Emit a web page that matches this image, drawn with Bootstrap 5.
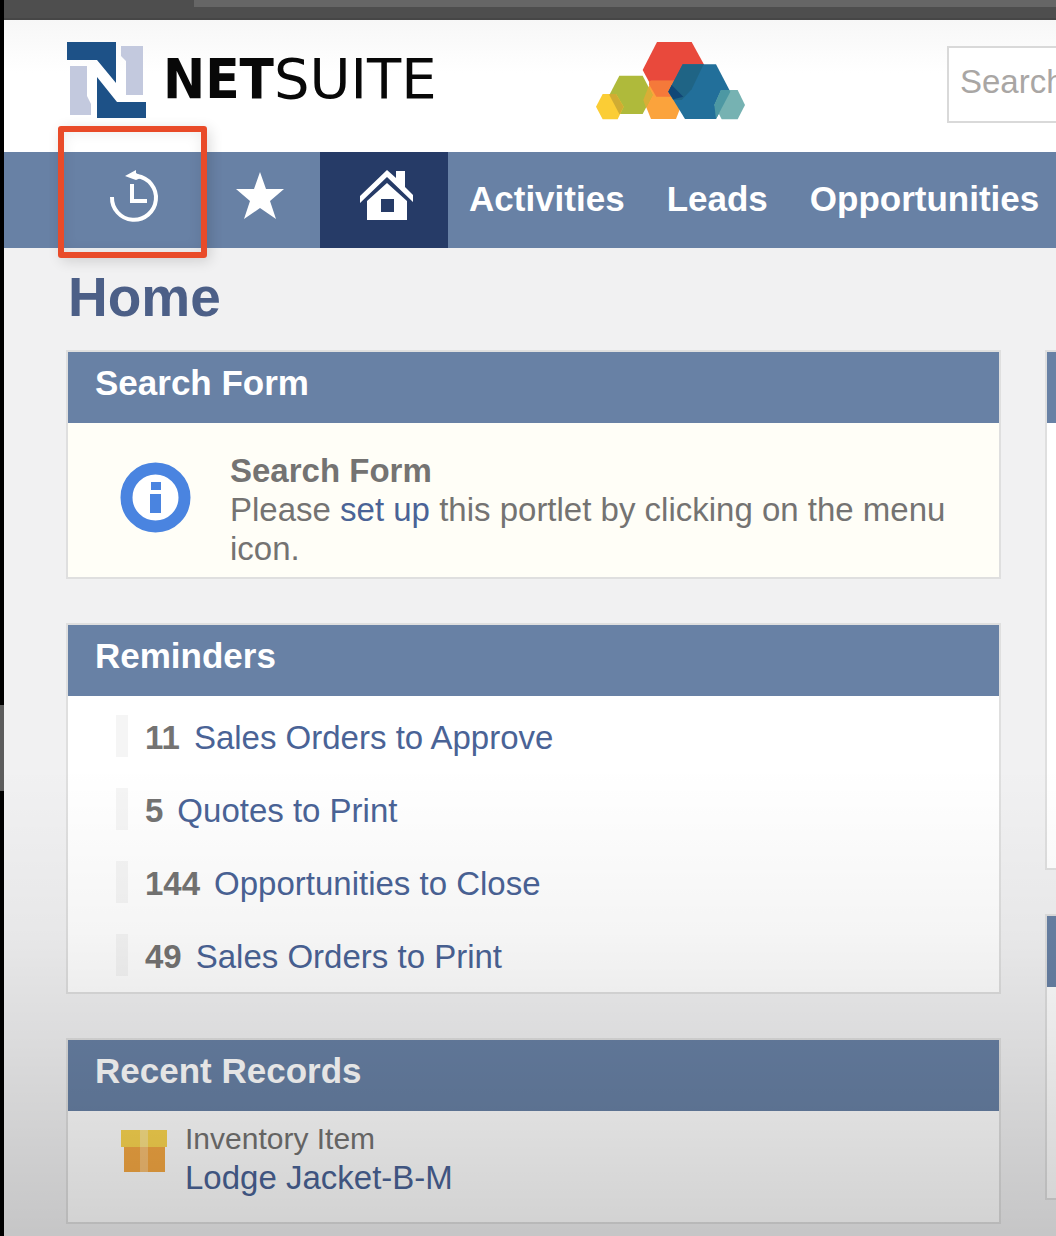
<!DOCTYPE html>
<html lang="en">
<head>
<meta charset="utf-8">
<meta name="viewport" content="width=device-width, initial-scale=1">
<title>Home - NetSuite</title>
<link href="https://cdn.jsdelivr.net/npm/bootstrap@5.3.0/dist/css/bootstrap.min.css" rel="stylesheet">
<style>
  :root { --ns-blue: #6881a5; --ns-navy: #263b67; --ns-link: #4a6396; --ns-text: #747372; }
  body { font-family: "Liberation Sans", Arial, sans-serif; font-size: 33px; line-height: 39px; color: var(--ns-text); background: #f1f1f2; }
  a { color: var(--ns-link); text-decoration: none; }
  .edge-strip { flex: 0 0 4px; background: linear-gradient(#000 57%, #5c5c5c 57%, #5c5c5c 64%, #000 64%); }
  .page-shell { min-width: 0; }
  .browser-bar { height: 20px; padding-left: 190px; background: #4e4e4e; border-bottom: 2px solid #464646; }
  .browser-tab { height: 7px; background: #666; }
  .brand-bar { height: 132px; padding-left: 62px; background: linear-gradient(#f7f7f7, #fff 40%); }
  .brand-left { flex: 0 0 530px; margin-top: 21px; }
  .brand-text { font-size: 56px; line-height: 76px; color: #080808; font-family: "DejaVu Sans", sans-serif; margin-left: 15px; }
  .brand-text b { font-family: "DejaVu Sans Condensed", "Open Sans", sans-serif; }
  .search-box { flex: 0 0 480px; height: 77px; margin: 26px 0 0 201px; padding: 0 11px 6px; font-size: 33px; border: 2px solid #d9d9d9; border-radius: 0; background: #fff; color: #555; }
  .search-box::placeholder { color: #a9a6a4; opacity: 1; }
  .main-nav { height: 96px; padding-left: 66px; background: var(--ns-blue); }
  .nav-tile { flex: 0 0 128px; border: 0; padding: 0 0 8px; background: transparent; }
  .nav-tile.fav { flex-basis: 122px; }
  .nav-tile.now { background: var(--ns-navy); }
  .nav-words { font-size: 35px; font-weight: 700; padding: 0 21px 4px; gap: 42px; }
  .nav-words a { color: #fff; }
  .callout-frame { left: -12px; top: -26px; width: 149px; height: 132px; border: 6px solid #e94b29; border-radius: 3px; box-shadow: 3px 3px 14px rgba(0,0,0,.14), inset 0 0 14px rgba(0,0,0,.08); pointer-events: none; }
  .page-main { padding: 19px 0 14px 64px; }
  .page-title { font-size: 55px; line-height: 60px; font-weight: 700; color: #4c5f87; margin-bottom: 25px; }
  .portlet-grid { display: grid; grid-template-columns: 94.25% 94.25%; column-gap: 48px; }
  .portlet { box-shadow: 0 0 0 2px #dfdfdf; background: #fff; margin-bottom: 48px; }
  .portlet-head { font-size: 35px; line-height: 40px; font-weight: 700; margin: 0; padding: 11px 27px 20px; min-height: 71px; background: var(--ns-blue); color: #fff; }
  .notice-body { background: #fffef7; padding: 28px 27px 9px 52px; gap: 39px; min-height: 154px; }
  .notice-body svg { margin-top: 11px; }
  .reminder-list { padding: 3px 0 1px; }
  .reminder-row { height: 73px; padding-left: 48px; }
  .reminder-row::before { content: ""; width: 12px; height: 42px; margin-right: 17px; background: #f5f5f5; }
  .reminder-row b, .reminder-row a { padding-top: 4px; }
  .reminder-row b { margin-right: 14px; }
  .record-body { min-height: 111px; padding: 8px 27px 0 52px; gap: 17px; }
  .record-body svg { margin-top: 10px; }
  .record-kind { font-size: 30px; }
  .side-top { min-height: 445px; }
  .side-low { min-height: 211px; }
  .bottom-shade { top: 62%; background: linear-gradient(rgba(0,0,0,0), rgba(0,0,0,.04) 35%, rgba(0,0,0,.18)); pointer-events: none; }
</style>
</head>
<body>
<div class="d-flex min-vh-100 position-relative overflow-hidden">
  <div class="edge-strip"></div>
  <div class="page-shell flex-grow-1 overflow-hidden">
    <div class="browser-bar"><div class="browser-tab"></div></div>

    <header class="brand-bar d-flex align-items-start">
      <a href="#" class="brand-left d-flex align-items-start" aria-label="NetSuite home">
        <svg class="flex-shrink-0" width="82" height="80" viewBox="66 41 82 80" aria-hidden="true">
          <path fill="#c3c9de" d="M70 66h17v30l4 8v11H70zM121 46h22v49h-17V61l-5-5z"/>
          <path fill="#1d5187" d="M67 42h49v41L97 60H67zM97 77l20 25h29v16H97z"/>
        </svg>
        <span class="brand-text"><b>NET</b>SUITE</span>
      </a>
      <svg class="flex-shrink-0 mt-3" width="150" height="86" viewBox="45 48 450 258" aria-hidden="true">
        <path fill="#e9493c" d="M185 150l43-84h104l46 84-46 80H228z"/>
        <path fill="#fff" d="M180 150l42 80h12l-30 20-30-60z"/>
        <path fill="#fba33c" d="M187 240l23-58h75l22 58-22 57h-75z"/>
        <path fill="#f5793a" d="M205 182h82l16 48h-77l-22-37z"/>
        <path fill="#afba3b" d="M85 225l30-58h70l30 58-30 57h-70z"/>
        <path fill="#fbcd35" d="M45 260l20-38h40l23 38-18 38H65z"/>
        <path fill="#d0ac33" d="M86 222h19l23 38-11 22h-2l-30-57z"/>
        <path fill="#d9ae36" d="M202 201l13 24-20 39-8-24z"/>
        <path fill="#226f9a" d="M262 215l43-82h100l43 82-43 82h-93z"/>
        <path fill="#1f6485" d="M262 215l43-82h63l-36 75-30 32-25 0z"/>
        <path fill="#114777" d="M262 215l10-20 35 35-30 8z"/>
        <path fill="#76b2b2" d="M400 255l20-45h50l22 45-22 43h-48z"/>
        <path fill="#4d98a3" d="M400 255l20-45h25l3 5-43 82z"/>
      </svg>
      <input class="search-box form-control" type="search" placeholder="Search" aria-label="Search">
    </header>

    <nav class="main-nav d-flex position-relative">
      <button type="button" class="nav-tile position-relative" aria-label="Recent records">
        <svg width="52" height="56" viewBox="108 168 52 56" aria-hidden="true" fill="none" stroke="#fff">
          <path stroke-width="4" d="M112 197a22 22 0 1 0 25-21"/>
          <path stroke-width="4" d="M132 184v17h15"/>
          <path fill="#fff" stroke="none" d="M125 176l11-6v3l7 4-7 3-3-1z"/>
        </svg>
        <span class="callout-frame position-absolute"></span>
      </button>
      <button type="button" class="nav-tile fav" aria-label="Shortcuts">
        <svg width="52" height="56" viewBox="233 168 52 56" aria-hidden="true">
          <path fill="#fff" d="M260 172l6 17h18l-14 12 6 18-16-11-16 11 6-18-14-12h18z"/>
        </svg>
      </button>
      <a href="#" class="nav-tile now d-flex align-items-center justify-content-center" aria-label="Home" aria-current="page">
        <svg width="58" height="56" viewBox="355 168 58 56" aria-hidden="true">
          <path fill="#fff" d="M360 196l27-26 9 8v-7h9v16l9 9v7l-27-26-27 26z"/>
          <path fill="#fff" fill-rule="evenodd" d="M387 183l20 18v19h-40v-19zM381 199v13h13v-13z"/>
        </svg>
      </a>
      <div class="nav-words d-flex align-items-center text-nowrap">
        <a href="#">Activities</a><a href="#">Leads</a><a href="#">Opportunities</a>
      </div>
    </nav>

    <main class="page-main">
      <h1 class="page-title">Home</h1>
      <div class="portlet-grid">
        <div>
          <section class="portlet">
            <h2 class="portlet-head">Search Form</h2>
            <div class="notice-body d-flex align-items-start">
              <svg class="flex-shrink-0" width="71" height="71" viewBox="0 0 71 71" aria-hidden="true">
                <circle cx="35.500" cy="35.500" r="29" fill="#fff" stroke="#4a84e0" stroke-width="12"/>
                <path fill="#4a84e0" d="M31 20h10v8H31zM30 32h11v19H30z"/>
              </svg>
              <div><b>Search Form</b><br>Please <a href="#">set up</a> this portlet by clicking on the menu icon.</div>
            </div>
          </section>
          <section class="portlet">
            <h2 class="portlet-head">Reminders</h2>
            <ul class="reminder-list list-unstyled mb-0">
              <li class="reminder-row d-flex align-items-center"><b>11</b><a href="#">Sales Orders to Approve</a></li>
              <li class="reminder-row d-flex align-items-center"><b>5</b><a href="#">Quotes to Print</a></li>
              <li class="reminder-row d-flex align-items-center"><b>144</b><a href="#">Opportunities to Close</a></li>
              <li class="reminder-row d-flex align-items-center"><b>49</b><a href="#">Sales Orders to Print</a></li>
            </ul>
          </section>
          <section class="portlet mb-0">
            <h2 class="portlet-head">Recent Records</h2>
            <div class="record-body d-flex align-items-start">
              <svg class="flex-shrink-0" width="48" height="44" viewBox="0 0 48 44" aria-hidden="true">
                <path fill="#f5a843" d="M4 17h41v26H4z"/>
                <path fill="#fbd650" d="M1 1h46v17H1z"/>
                <path fill="#fce287" d="M20 1h8v17h-8z"/>
                <path fill="#f8c074" d="M20 18h8v25h-8z"/>
              </svg>
              <div><div class="record-kind">Inventory Item</div><a href="#">Lodge Jacket-B-M</a></div>
            </div>
          </section>
        </div>
        <div>
          <section class="portlet mb-0"><div class="portlet-head"></div><div class="side-top"></div></section>
          <section class="portlet mt-5 mb-0"><div class="portlet-head"></div><div class="side-low"></div></section>
        </div>
      </div>
    </main>
  </div>
  <div class="bottom-shade position-absolute start-0 end-0 bottom-0"></div>
</div>
<script src="https://cdn.jsdelivr.net/npm/bootstrap@5.3.0/dist/js/bootstrap.bundle.min.js"></script>
</body>
</html>
